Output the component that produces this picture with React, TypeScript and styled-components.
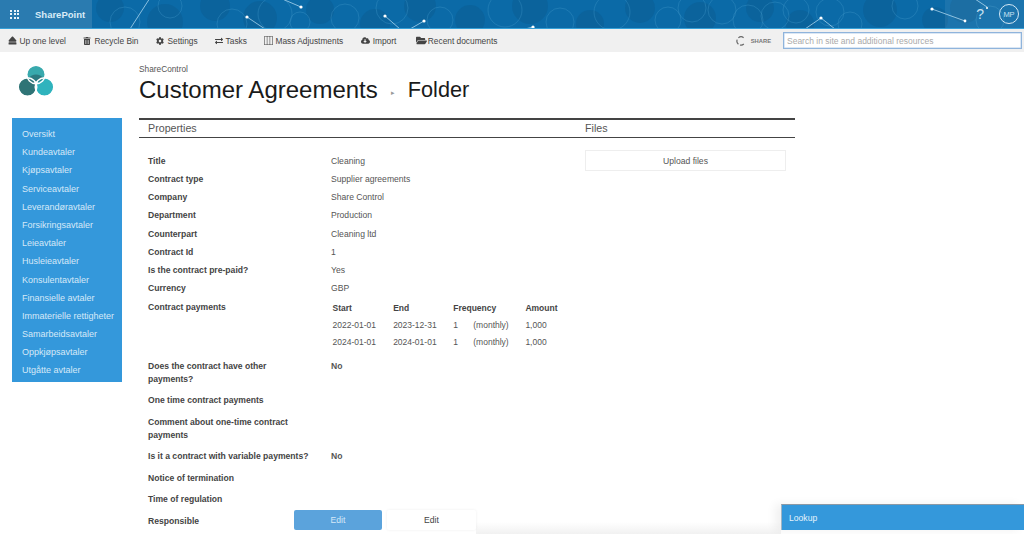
import React from 'react'
import styled, { createGlobalStyle } from 'styled-components'
import { FaCog, FaEject, FaExchangeAlt, FaCloudDownloadAlt, FaFolderOpen, FaTrashAlt } from 'react-icons/fa'
import { BsLayoutThreeColumns } from 'react-icons/bs'

const GlobalStyle = createGlobalStyle`
  html, body { margin: 0; padding: 0; background: #fff; }
  body { font-family: "Liberation Sans", Arial, sans-serif; color: #333; overflow: hidden; }
`

const Page = styled.div`
  width: 1024px;
  height: 534px;
  overflow: hidden;
  position: relative;
  background: #fff;
`

const SuiteBar = styled.header`
  height: 28px;
  background: #0b6aa7;
  border-bottom: 1px solid #35a0d8;
  display: flex;
  align-items: center;
  position: relative;
  overflow: hidden;
`

const Pattern = styled.svg`
  position: absolute;
  inset: 0;
`

const AppTile = styled.div`
  position: relative;
  width: 92px;
  height: 100%;
  background: #2a7bb0;
  display: flex;
  align-items: center;
  gap: 16px;
  padding-left: 10px;
  box-sizing: border-box;
  color: #d9ebf7;
  font-size: 9.5px;
  font-weight: bold;
`

const Waffle = styled.div`
  display: grid;
  grid-template-columns: repeat(3, 2px);
  gap: 1.5px;
  span { width: 2px; height: 2px; background: #eaf4fb; }
`

const SuiteRight = styled.div`
  position: relative;
  margin-left: auto;
  width: 79px;
  height: 100%;
  background: rgba(255, 255, 255, 0.07);
  display: flex;
  align-items: center;
  justify-content: flex-end;
  gap: 15px;
  padding-right: 5px;
  box-sizing: border-box;
  color: #c9e1f1;
`

const Help = styled.span`
  font-size: 14px;
`

const Avatar = styled.span`
  width: 18px;
  height: 18px;
  border: 1px solid #d5e8f5;
  border-radius: 50%;
  display: flex;
  align-items: center;
  justify-content: center;
  font-size: 7.5px;
`

const Toolbar = styled.nav`
  height: 23px;
  background: #f0f0f0;
  display: flex;
  align-items: center;
  padding: 0 2px 0 8px;
  font-size: 8.35px;
  color: #444;
`

const ToolItem = styled.span<{ $gap?: number; $after?: number }>`
  display: flex;
  align-items: center;
  gap: ${p => p.$gap ?? 2.5}px;
  margin-right: ${p => p.$after ?? 17.5}px;
  white-space: nowrap;
  svg { color: #444; flex: none; }
`

const ShareBox = styled.span`
  margin-left: auto;
  display: flex;
  align-items: center;
  gap: 5px;
  margin-right: 12px;
  font-size: 5.8px;
  font-weight: bold;
  color: #777;
`

const SearchBox = styled.div`
  width: 239px;
  height: 17px;
  box-sizing: border-box;
  background: #fff;
  border: 1px solid #8fb4dc;
  box-shadow: inset 0 0 0 0.5px #b8d0ea;
  padding-left: 3px;
  display: flex;
  align-items: center;
  color: #aaa;
  font-size: 8.5px;
`

const Body = styled.div`
  display: flex;
`

const LeftColumn = styled.aside`
  width: 139px;
  flex: none;
  padding-left: 12px;
  box-sizing: border-box;
`

const LogoWrap = styled.div`
  height: 66px;
  padding: 13px 0 0 6px;
  box-sizing: border-box;
`

const SideNav = styled.ul`
  list-style: none;
  margin: 0;
  padding: 7px 0 2px 10px;
  width: 110px;
  box-sizing: border-box;
  background: #3498db;
`

const SideItem = styled.li`
  height: 18.2px;
  line-height: 18.2px;
  font-size: 9px;
  color: #d6e9f8;
  white-space: nowrap;
`

const Main = styled.main`
  width: 656px;
  flex: none;
`

const Crumb = styled.div`
  font-size: 8.3px;
  color: #555;
  padding-top: 12px;
  height: 11px;
  line-height: 11px;
`

const TitleRow = styled.h1`
  margin: 0;
  height: 43px;
  padding-bottom: 14px;
  box-sizing: border-box;
  display: flex;
  align-items: center;
  font-size: 24px;
  font-weight: normal;
  color: #1a1a1a;
  white-space: nowrap;
`

const TitleArrow = styled.span`
  width: 30px;
  text-align: center;
  font-size: 7px;
  color: #999;
  padding-top: 6px;
  box-sizing: border-box;
`

const FolderName = styled.span`
  font-size: 21.7px;
`

const Columns = styled.div`
  display: grid;
  grid-template-columns: 446px 1fr;
  border-top: 2px solid #444;
  border-bottom: 1.5px solid #444;
  height: 15px;
  padding-bottom: 2px;
  align-items: center;
  font-size: 10.7px;
  color: #555;
`

const ColumnHead = styled.span<{ $indent: number }>`
  padding-left: ${p => p.$indent}px;
`

const Content = styled.div`
  display: grid;
  grid-template-columns: 446px 201px;
  padding-top: 14px;
  align-items: start;
`

const Rows = styled.div`
  padding-left: 9px;
  font-size: 8.6px;
`

const Row = styled.div<{ $h?: number }>`
  display: grid;
  grid-template-columns: 183px 1fr;
  min-height: ${p => p.$h || 18.25}px;
  line-height: 13.3px;
  align-items: start;
  padding-top: 2.5px;
  box-sizing: border-box;
`

const Label = styled.span`
  font-weight: bold;
  color: #444;
`

const Value = styled.span<{ $bold?: boolean }>`
  color: #555;
  font-weight: ${p => (p.$bold ? 'bold' : 'normal')};
`

const Payments = styled.table`
  border-collapse: collapse;
  table-layout: fixed;
  width: 233px;
  justify-self: start;
  font-size: 8.5px;
  color: #555;
  margin-left: 1.5px;
  th { text-align: left; font-weight: bold; color: #444; }
  th, td { padding: 0; height: 17px; }
`

const UploadButton = styled.div`
  height: 21px;
  box-sizing: border-box;
  border: 1px solid #eee;
  display: flex;
  align-items: center;
  justify-content: center;
  font-size: 8.6px;
  color: #555;
  margin-top: -2px;
`

const EditBar = styled.div`
  position: absolute;
  left: 294px;
  bottom: 4px;
  display: flex;
  gap: 5px;
`

const EditButton = styled.button<{ $primary?: boolean }>`
  width: ${p => (p.$primary ? 88 : 89)}px;
  height: 20px;
  border: 0;
  border-radius: 2px;
  background: ${p => (p.$primary ? '#5ba3dc' : '#fff')};
  box-shadow: ${p => (p.$primary ? 'none' : '0 0 3px rgba(0, 0, 0, 0.07)')};
  color: ${p => (p.$primary ? '#d5e8f8' : '#444')};
  font: 8.6px "Liberation Sans", Arial, sans-serif;
  padding: 0;
`

const EditShade = styled.div`
  position: absolute;
  left: 476px;
  bottom: 0;
  width: 305px;
  height: 12px;
  background: linear-gradient(to bottom, #fff, #f1f1f1);
`

const LookupPanel = styled.div`
  position: absolute;
  left: 781px;
  top: 504px;
  width: 243px;
  height: 26px;
  box-sizing: border-box;
  padding-left: 7px;
  display: flex;
  align-items: center;
  background: #3498db;
  border-top: 1.5px solid #8b99a5;
  border-left: 1px solid #9fb4c4;
  box-shadow: -6px 0 10px rgba(0, 0, 0, 0.06);
  color: #e6f3fc;
  font-size: 8.6px;
`

const navItems = ['Oversikt', 'Kundeavtaler', 'Kjøpsavtaler', 'Serviceavtaler', 'Leverandøravtaler', 'Forsikringsavtaler', 'Leieavtaler', 'Husleieavtaler', 'Konsulentavtaler', 'Finansielle avtaler', 'Immaterielle rettigheter', 'Samarbeidsavtaler', 'Oppkjøpsavtaler', 'Utgåtte avtaler']

const basicRows = [
  ['Title', 'Cleaning'],
  ['Contract type', 'Supplier agreements'],
  ['Company', 'Share Control'],
  ['Department', 'Production'],
  ['Counterpart', 'Cleaning ltd'],
  ['Contract Id', '1'],
  ['Is the contract pre-paid?', 'Yes'],
  ['Currency', 'GBP'],
]

const blobs = [[40,20,16],[110,8,14],[165,22,18],[215,6,15],[260,18,17],[320,10,14],[375,24,15],[420,6,16],[470,20,15],[530,6,18],[590,24,14],[640,8,15],[700,18,16],[760,8,14],[800,24,14],[880,10,17],[935,20,13],[965,8,15]]
const rings = [[125,22,15],[170,6,12],[232,24,15],[275,14,17],[300,22,10],[345,18,14],[392,8,16],[440,20,13],[505,10,17],[560,22,14],[612,12,18],[668,20,13],[692,8,14],[722,10,14],[748,20,15],[775,16,14],[796,10,13],[830,12,14],[850,24,12],[905,6,13],[990,20,14]]
const links = [[150,-2,130,29],[301,7,280,-2],[247,17,265,29],[385,16,400,29],[424,21,410,29],[533,27,525,29],[821,18,805,29],[821,18,835,29],[932,9,965,21],[975,-1,987,7]]
const dots = [[301,7,1.6],[247,17,1.6],[385,16,1.6],[424,21,1.6],[533,27,1.6],[821,18,1.6],[932,9,1.6],[965,21,1.4],[987,8,1]]

function SuitePattern() {
  return (
    <Pattern width="1024" height="29" viewBox="0 0 1024 29">
      {blobs.map(([x, y, r]) => <circle key={`b${x}`} cx={x} cy={y} r={r} fill="#0a5a90" opacity="0.45" />)}
      {rings.map(([x, y, r]) => <circle key={`r${x}`} cx={x} cy={y} r={r} fill="none" stroke="#3f95c8" strokeWidth="0.7" opacity="0.55" />)}
      {links.map(([a, b, c, d]) => <line key={`l${a}${c}`} x1={a} y1={b} x2={c} y2={d} stroke="#a8d4ee" strokeWidth="0.8" />)}
      {dots.map(([x, y, r]) => <circle key={`d${x}`} cx={x} cy={y} r={r} fill="#fff" />)}
    </Pattern>
  )
}

function Logo() {
  return (
    <svg width="36" height="32" viewBox="0 0 36 32">
      <circle cx="18" cy="9.5" r="9" fill="#38a9ad" />
      <circle cx="9.5" cy="22" r="9" fill="#2f7476" />
      <circle cx="26.5" cy="22" r="9" fill="#2fb3bd" />
      <path d="M10.5 13.5a9 9 0 0 1 15 0a9.5 9.5 0 0 1-15 0z" fill="#2c7a80" />
      <g fill="none" stroke="#fff" strokeWidth="1.5">
        <circle cx="18" cy="9.5" r="9.3" />
        <circle cx="9.5" cy="22" r="9.3" />
        <circle cx="26.5" cy="22" r="9.3" />
      </g>
      <circle cx="18" cy="18" r="1.8" fill="#fff" />
    </svg>
  )
}

function ShareIcon() {
  return (
    <svg width="10" height="10" viewBox="0 0 10 10" fill="none" stroke="#666" strokeWidth="1.2">
      <path d="M7.6 1.7A4 4 0 0 0 2.4 1.9M1.2 3.6A4 4 0 0 0 2.4 8.2M4 9A4 4 0 0 0 7.8 8" />
    </svg>
  )
}

export default function App() {
  return (
    <Page>
      <GlobalStyle />
      <SuiteBar>
        <SuitePattern />
        <AppTile>
          <Waffle>{Array.from({ length: 9 }, (_, i) => <span key={i} />)}</Waffle>
          SharePoint
        </AppTile>
        <SuiteRight>
          <Help>?</Help>
          <Avatar>MP</Avatar>
        </SuiteRight>
      </SuiteBar>
      <Toolbar>
        <ToolItem><FaEject size={9} />Up one level</ToolItem>
        <ToolItem $gap={3}><FaTrashAlt size={8} />Recycle Bin</ToolItem>
        <ToolItem $gap={3.5}><FaCog size={8} />Settings</ToolItem>
        <ToolItem><FaExchangeAlt size={8} />Tasks</ToolItem>
        <ToolItem $gap={2}><BsLayoutThreeColumns size={9} />Mass Adjustments</ToolItem>
        <ToolItem $gap={3} $after={19.5}><FaCloudDownloadAlt size={9} />Import</ToolItem>
        <ToolItem $gap={1}><FaFolderOpen size={11} />Recent documents</ToolItem>
        <ShareBox><ShareIcon />SHARE</ShareBox>
        <SearchBox>Search in site and additional resources</SearchBox>
      </Toolbar>
      <Body>
        <LeftColumn>
          <LogoWrap><Logo /></LogoWrap>
          <SideNav>
            {navItems.map(item => <SideItem key={item}>{item}</SideItem>)}
          </SideNav>
        </LeftColumn>
        <Main>
          <Crumb>ShareControl</Crumb>
          <TitleRow>
            Customer Agreements
            <TitleArrow>▸</TitleArrow>
            <FolderName>Folder</FolderName>
          </TitleRow>
          <Columns>
            <ColumnHead $indent={9}>Properties</ColumnHead>
            <ColumnHead $indent={0}>Files</ColumnHead>
          </Columns>
          <Content>
            <Rows>
              {basicRows.map(([label, value]) => (
                <Row key={label}>
                  <Label>{label}</Label>
                  <Value>{value}</Value>
                </Row>
              ))}
              <Row $h={59}>
                <Label>Contract payments</Label>
                <Payments>
                  <colgroup>
                    <col width="60.5" /><col width="60" /><col width="20" /><col width="52" /><col width="40" />
                  </colgroup>
                  <thead>
                    <tr><th>Start</th><th>End</th><th colSpan={2}>Frequency</th><th>Amount</th></tr>
                  </thead>
                  <tbody>
                    <tr><td>2022-01-01</td><td>2023-12-31</td><td>1</td><td>(monthly)</td><td>1,000</td></tr>
                    <tr><td>2024-01-01</td><td>2024-01-01</td><td>1</td><td>(monthly)</td><td>1,000</td></tr>
                  </tbody>
                </Payments>
              </Row>
              <Row $h={34.5}><Label>Does the contract have other<br />payments?</Label><Value $bold>No</Value></Row>
              <Row $h={21.5}><Label>One time contract payments</Label></Row>
              <Row $h={34.5}><Label>Comment about one-time contract<br />payments</Label></Row>
              <Row $h={21.5}><Label>Is it a contract with variable payments?</Label><Value $bold>No</Value></Row>
              <Row $h={21.5}><Label>Notice of termination</Label></Row>
              <Row $h={21.5}><Label>Time of regulation</Label></Row>
              <Row $h={21.5}><Label>Responsible</Label></Row>
            </Rows>
            <UploadButton>Upload files</UploadButton>
          </Content>
        </Main>
      </Body>
      <EditShade />
      <EditBar>
        <EditButton $primary>Edit</EditButton>
        <EditButton>Edit</EditButton>
      </EditBar>
      <LookupPanel>Lookup</LookupPanel>
    </Page>
  )
}
